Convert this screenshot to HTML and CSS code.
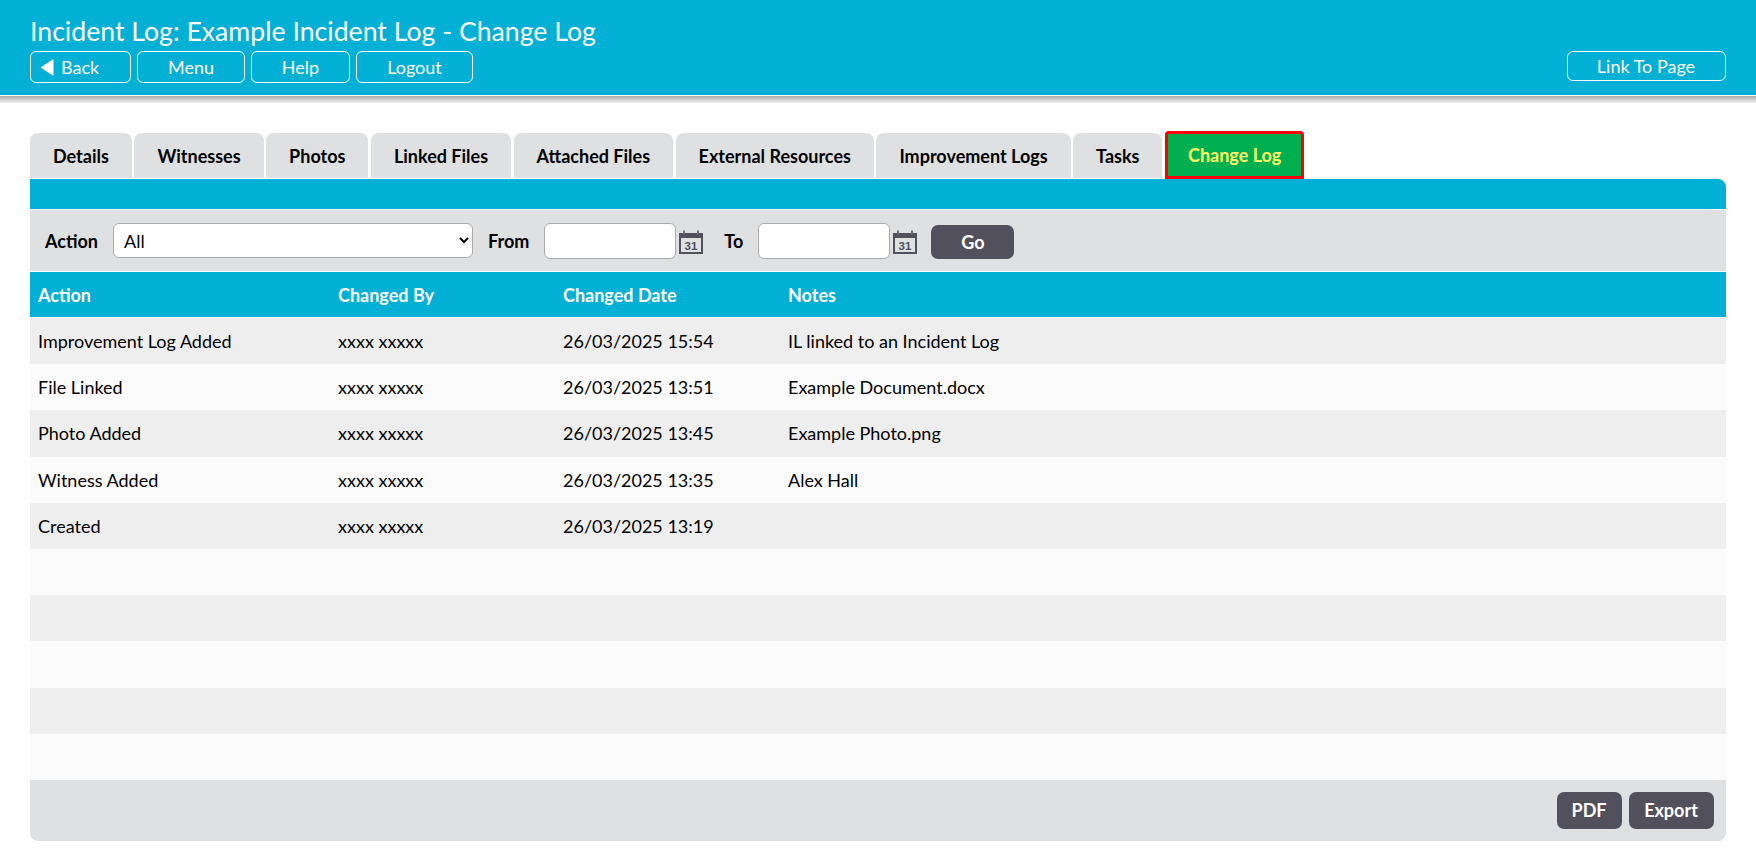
FILE: index.html
```html
<!DOCTYPE html>
<html lang="en">
<head>
  <meta charset="UTF-8" />
  <title>Incident Log: Example Incident Log - Change Log</title>
  <link rel="stylesheet" href="styles.css">
</head>
<body>
  <header class="topBar">
    <h1>Incident Log: Example Incident Log - Change Log</h1>
    <div class="topButtons">
      <div class="navButtons">
        <a class="navBtn backBtn" href="#">
          <svg width="14" height="17" viewBox="0 0 14 17"><polygon points="13.5,0 13.5,17 0.5,8.5" fill="#fff"/></svg>
          Back
        </a>
        <a class="navBtn menuBtn" href="#">Menu</a>
        <a class="navBtn helpBtn" href="#">Help</a>
        <a class="navBtn logoutBtn" href="#">Logout</a>
      </div>
      <a class="navBtn linkBtn" href="#">Link To Page</a>
    </div>
  </header>
  <div class="topShadow"></div>

  <main class="content">
    <nav class="tabs">
      <a class="tab" href="#">Details</a>
      <a class="tab" href="#">Witnesses</a>
      <a class="tab" href="#">Photos</a>
      <a class="tab" href="#">Linked Files</a>
      <a class="tab" href="#">Attached Files</a>
      <a class="tab" href="#">External Resources</a>
      <a class="tab" href="#">Improvement Logs</a>
      <a class="tab" href="#">Tasks</a>
      <a class="tab tabActive" href="#">Change Log</a>
    </nav>

    <section class="panel">
      <div class="panelStrip"></div>

      <form class="filters">
        <label class="actionLabel" for="actionSelect">Action</label>
        <select id="actionSelect" class="actionSelect">
          <option>All</option>
        </select>
        <label class="fromLabel" for="fromDate">From</label>
        <input id="fromDate" class="dateInput" type="text">
        <svg class="calIcon" width="24" height="24" viewBox="0 0 24 24">
          <path d="M0 3h4v1.5h2V3h12v1.5h2V3h4v21H0z" fill="#51505c"/>
          <rect x="4.2" y="0.5" width="1.6" height="5.5" fill="#51505c"/>
          <rect x="18.2" y="0.5" width="1.6" height="5.5" fill="#51505c"/>
          <rect x="2" y="8" width="20" height="14" fill="#dfe0e2"/>
          <text x="12" y="20" class="calText">31</text>
        </svg>
        <label class="toLabel" for="toDate">To</label>
        <input id="toDate" class="dateInput" type="text">
        <svg class="calIcon" width="24" height="24" viewBox="0 0 24 24">
          <path d="M0 3h4v1.5h2V3h12v1.5h2V3h4v21H0z" fill="#51505c"/>
          <rect x="4.2" y="0.5" width="1.6" height="5.5" fill="#51505c"/>
          <rect x="18.2" y="0.5" width="1.6" height="5.5" fill="#51505c"/>
          <rect x="2" y="8" width="20" height="14" fill="#dfe0e2"/>
          <text x="12" y="20" class="calText">31</text>
        </svg>
        <button class="darkBtn goBtn" type="button">Go</button>
      </form>

      <div class="logRow logHead">
        <div>Action</div><div>Changed By</div><div>Changed Date</div><div>Notes</div>
      </div>
      <div class="logRow">
        <div>Improvement Log Added</div><div>xxxx xxxxx</div><div>26/03/2025 15:54</div><div>IL linked to an Incident Log</div>
      </div>
      <div class="logRow">
        <div>File Linked</div><div>xxxx xxxxx</div><div>26/03/2025 13:51</div><div>Example Document.docx</div>
      </div>
      <div class="logRow">
        <div>Photo Added</div><div>xxxx xxxxx</div><div>26/03/2025 13:45</div><div>Example Photo.png</div>
      </div>
      <div class="logRow">
        <div>Witness Added</div><div>xxxx xxxxx</div><div>26/03/2025 13:35</div><div>Alex Hall</div>
      </div>
      <div class="logRow">
        <div>Created</div><div>xxxx xxxxx</div><div>26/03/2025 13:19</div><div></div>
      </div>
      <div class="logRow"></div>
      <div class="logRow"></div>
      <div class="logRow"></div>
      <div class="logRow"></div>
      <div class="logRow"></div>

      <div class="panelFooter">
        <button class="darkBtn pdfBtn" type="button">PDF</button>
        <button class="darkBtn exportBtn" type="button">Export</button>
      </div>
    </section>
  </main>
</body>
</html>
```

FILE: styles.css
```css
body {
  margin: 0;
  background-color: #fff;
  color: #000;
  font-family: Lato, "Open Sans", sans-serif;
  font-size: 18px;
}

.topBar {
  height: 95px;
  box-sizing: border-box;
  padding: 14px 30.5px 0 30px;
  background-color: #02afd5;
  color: #fff;
}

.topBar h1 {
  margin: 0;
  height: 37px;
  font-size: 26.67px;
  font-weight: 400;
  line-height: 34px;
}

.topButtons {
  display: flex;
  justify-content: space-between;
}

.navButtons {
  display: flex;
  gap: 6px;
}

.navBtn {
  display: flex;
  align-items: center;
  justify-content: center;
  gap: 7px;
  box-sizing: border-box;
  height: 32px;
  border: 1px solid #fff;
  border-radius: 6px;
  color: #fff;
  font-size: 18px;
  text-decoration: none;
}

.backBtn { width: 101px; justify-content: flex-start; padding-left: 9px; }
.menuBtn { width: 108px; }
.helpBtn { width: 99px; }
.logoutBtn { width: 117px; }
.linkBtn { width: 159px; height: 30px; }

.topShadow {
  height: 7px;
  margin-top: 1px;
  background: linear-gradient(#a9a9a9, #f2f2f2);
}

.content {
  padding: 0 30.5px 0 30px;
}

.tabs {
  display: flex;
  align-items: flex-end;
  gap: 2.5px;
  margin-top: 30px;
  height: 46px;
}

.tab {
  display: flex;
  align-items: center;
  height: 45px;
  box-sizing: border-box;
  padding: 0 23px;
  border-radius: 8px 8px 0 0;
  background-color: #dfe0e2;
  color: #000;
  font-weight: 700;
  text-decoration: none;
  margin-bottom: 1px;
}

.tabActive {
  height: 48px;
  margin-bottom: 0;
  padding: 0 20px;
  border: 3px solid #ff0000;
  border-radius: 4px 4px 0 0;
  background-color: #00b050;
  color: #ffff66;
}

.panel {
  border-radius: 0 8px 8px 8px;
  overflow: hidden;
}

.panelStrip {
  height: 30px;
  background-color: #02afd5;
  border-bottom: 1px solid #fff;
}

.filters {
  display: flex;
  align-items: center;
  height: 61px;
  padding: 0 15px;
  background-color: #dfe0e2;
  border-bottom: 1px solid #fff;
  font-weight: 700;
}

.actionSelect {
  width: 360px;
  height: 35px;
  margin-left: 15px;
  padding: 0 6px;
  border: 1px solid #aaa;
  border-radius: 6px;
  background-color: #fff;
  font-family: Lato, sans-serif;
  font-size: 18px;
}

.fromLabel { margin-left: 15px; }

.dateInput {
  width: 132px;
  height: 36px;
  box-sizing: border-box;
  margin-left: 15px;
  border: 1px solid #aaa;
  border-radius: 6px;
  background-color: #fff;
}

.calIcon {
  margin-left: 3px;
  margin-top: 3px;
}

.calText {
  font-family: "Liberation Sans", sans-serif;
  font-size: 11.5px;
  font-weight: 700;
  fill: #51505c;
  text-anchor: middle;
}

.toLabel { margin-left: 21px; }

.darkBtn {
  border: 0;
  border-radius: 7px;
  background-color: #51505c;
  color: #fff;
  font-family: inherit;
  font-size: 18px;
  font-weight: 700;
}

.goBtn {
  width: 83px;
  height: 34px;
  margin-left: 14px;
  margin-top: 2px;
}

.logRow {
  display: grid;
  grid-template-columns: 300px 225px 225px 1fr;
  align-items: center;
  height: 46.2px;
  background-color: #fbfbfb;
}

.logRow div {
  padding-left: 8px;
}

.logRow:nth-of-type(odd) {
  background-color: #eeeeee;
}

.logHead,
.logHead:nth-of-type(odd) {
  height: 46px;
  background-color: #02afd5;
  border-bottom: 1px solid #fff;
  box-sizing: border-box;
  color: #fff;
  font-weight: 700;
}

.panelFooter {
  display: flex;
  justify-content: flex-end;
  gap: 7px;
  height: 61px;
  box-sizing: border-box;
  padding: 12px 12px 0 0;
  background-color: #dfe0e2;
}

.pdfBtn { width: 65px; height: 37px; }
.exportBtn { width: 85px; height: 37px; }
```
